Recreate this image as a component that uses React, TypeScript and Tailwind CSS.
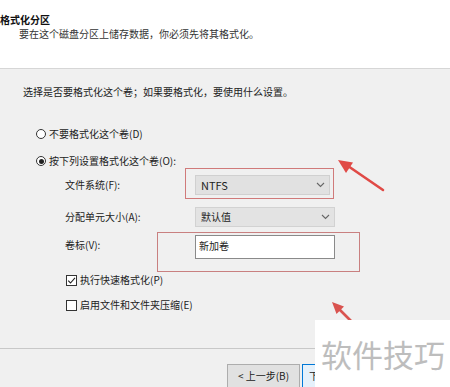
import React from "react";

const font = { fontFamily: '"Noto Sans CJK SC", "Noto Sans", sans-serif' };

function Chevron() {
  return (
    <svg width="9" height="6" viewBox="0 0 9 6" className="shrink-0">
      <path d="M1 1 L4.5 4.5 L8 1" fill="none" stroke="#666" strokeWidth="1.1" />
    </svg>
  );
}

function Radio({ checked }: { checked?: boolean }) {
  return (
    <span className="w-[10px] h-[10px] rounded-full border border-[#333] bg-white flex items-center justify-center shrink-0">
      {checked && <span className="w-[5px] h-[5px] rounded-full bg-[#222]" />}
    </span>
  );
}

function Checkbox({ checked }: { checked?: boolean }) {
  return (
    <span className="w-[11px] h-[11px] border border-[#333] bg-white flex items-center justify-center shrink-0">
      {checked && (
        <svg width="9" height="9" viewBox="0 0 9 9">
          <path d="M1.2 4.6 L3.5 7 L8 1.8" fill="none" stroke="#222" strokeWidth="1.1" />
        </svg>
      )}
    </span>
  );
}

export default function App() {
  return (
    <div
      className="relative w-[450px] h-[387px] overflow-hidden bg-[#f0f0f0] text-[#222] text-[10px] leading-[14px]"
      style={font}
    >
      {/* header */}
      <div className="h-[69px] bg-white border-b border-[#d6d6d6] pt-[13px]">
        <div className="font-bold text-[#111]">格式化分区</div>
        <div className="pl-[19px] text-[#333]">要在这个磁盘分区上储存数据，你必须先将其格式化。</div>
      </div>

      {/* body */}
      <div className="h-[280px] border-b border-[#c8c8c8] pt-[16px]">
        <div className="pl-[23px]">选择是否要格式化这个卷；如果要格式化，要使用什么设置。</div>

        <div className="pl-[36px] mt-[28px] flex items-center gap-[3px]">
          <Radio />
          <span>不要格式化这个卷(D)</span>
        </div>
        <div className="pl-[36px] mt-[13px] flex items-center gap-[3px]">
          <Radio checked />
          <span>按下列设置格式化这个卷(O):</span>
        </div>

        <div className="mt-[7px] flex items-center">
          <span className="w-[195px] pl-[65px]">文件系统(F):</span>
          <div className="w-[135px] h-[20px] bg-[#e1e1e1] border border-[#d0d0d0] flex items-center justify-between pl-[5px] pr-[4px] text-[11px]">
            <span>NTFS</span>
            <Chevron />
          </div>
        </div>

        <div className="mt-[12px] flex items-center">
          <span className="w-[195px] pl-[65px]">分配单元大小(A):</span>
          <div className="w-[140px] h-[20px] bg-[#e3e3e3] border border-[#d2d2d2] flex items-center justify-between pl-[5px] pr-[4px]">
            <span>默认值</span>
            <Chevron />
          </div>
        </div>

        <div className="mt-[8px] flex items-start">
          <span className="w-[195px] pl-[65px] pt-[3px]">卷标(V):</span>
          <div className="w-[140px] h-[24px] bg-white border border-[#8a8a8a] pl-[3px] pt-[3px]">新加卷</div>
        </div>

        <div className="pl-[66px] mt-[14px] flex items-center gap-[3px]">
          <Checkbox checked />
          <span>执行快速格式化(P)</span>
        </div>
        <div className="pl-[66px] mt-[11px] flex items-center gap-[3px]">
          <Checkbox />
          <span>启用文件和文件夹压缩(E)</span>
        </div>
      </div>

      {/* footer */}
      <div className="pt-[15px] pl-[227px]">
        <div className="w-[88px] overflow-hidden flex gap-[2px]">
          <div className="w-[73px] h-[24px] shrink-0 bg-[#e1e1e1] border border-[#adadad] flex items-center justify-center">
            &lt; 上一步(B)
          </div>
          <div className="w-[73px] h-[24px] shrink-0 bg-[#e5f1fb] border border-[#0078d7] flex items-center pl-[6px]">
            下
          </div>
        </div>
      </div>

      {/* annotation boxes */}
      <div className="absolute left-[185px] top-[168px] w-[149px] h-[31px] border-[1.5px] border-[#d07a7a]" />
      <div className="absolute left-[157px] top-[232px] w-[203px] h-[40px] border-[1.5px] border-[#c98080]" />

      {/* arrows */}
      <svg className="absolute left-0 top-0 pointer-events-none" width="450" height="387" viewBox="0 0 450 387">
        <path d="M383 190 L348 166" stroke="#e04a46" strokeWidth="2.6" strokeLinecap="round" />
        <polygon points="338,160 353,162.5 346,173" fill="#e04a46" />
        <path d="M352 322 L339 309" stroke="#d9534f" strokeWidth="2.6" strokeLinecap="round" />
        <polygon points="332,302 344,306.5 336.5,314" fill="#d9534f" />
      </svg>

      {/* watermark */}
      <div className="absolute left-[315px] top-[320px] w-[135px] h-[67px] bg-white flex items-center pl-[6px] text-[31px] leading-[34px] text-[#bdbdbd]">
        软件技巧
      </div>
    </div>
  );
}
